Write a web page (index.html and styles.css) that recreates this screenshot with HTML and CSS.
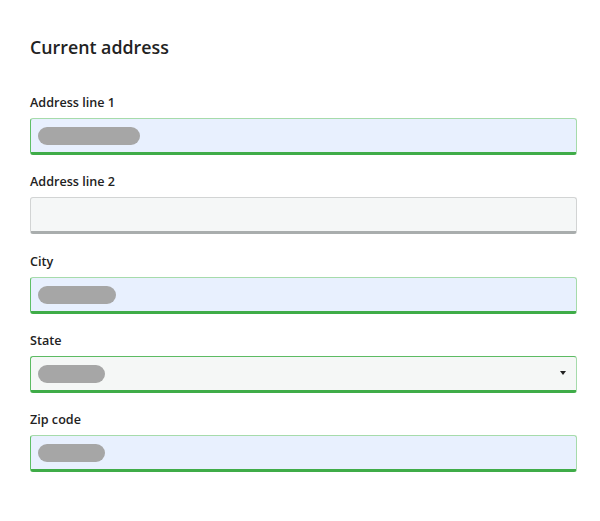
FILE: index.html
```html
<!DOCTYPE html>
<html>
<head>
<meta charset="utf-8">
<link rel="stylesheet" href="styles.css">
</head>
<body>
<div class="page">
  <h2 class="title">Current address</h2>
  <div class="field">
    <label class="label">Address line 1</label>
    <div class="input filled"><span class="blob" style="width:102px"></span></div>
  </div>
  <div class="field">
    <label class="label">Address line 2</label>
    <div class="input empty"></div>
  </div>
  <div class="field">
    <label class="label">City</label>
    <div class="input filled"><span class="blob" style="width:78px"></span></div>
  </div>
  <div class="field">
    <label class="label">State</label>
    <div class="input select"><span class="blob" style="width:67px"></span><span class="caret"></span></div>
  </div>
  <div class="field">
    <label class="label">Zip code</label>
    <div class="input filled"><span class="blob" style="width:67px"></span></div>
  </div>
</div>
</body>
</html>
```
FILE: styles.css
```css
* { box-sizing: border-box; }
html, body { margin: 0; background: #fff; }
body { font-family: "Open Sans", "Noto Sans", sans-serif; color: #222; }
.page { padding: 35px 0 0 30px; width: 577px; }
.title { margin: 0 0 35px; font-size: 17.8px; line-height: 24px; font-weight: 600; color: #222; }
.field { margin-bottom: 18.3px; }
.label { display: block; font-size: 12.6px; line-height: 17px; font-weight: 600; margin-bottom: 7px; color: #222; }
.input { position: relative; height: 37px; width: 547px; border: 1px solid #ccc; border-bottom-width: 3px; border-radius: 3px; padding: 8px 7px 0; display: flex; align-items: flex-start; }
.filled { background: #e8f0fe; border-color: #a6dbab #a6dbab #3fac48 #5fbf67; }
.empty { background: #f5f7f7; border-color: #d2d4d4 #d2d4d4 #a9adad #d2d4d4; }
.select { background: #f5f7f6; border-color: #5dbb63 #a6dbab #3fac48 #5dbb63; }
.blob { display: block; height: 18px; border-radius: 9px; background: #a6a6a6; }
.caret { position: absolute; right: 10px; top: 14px; width: 0; height: 0; border-left: 3.5px solid transparent; border-right: 3.5px solid transparent; border-top: 4px solid #222; }
```
